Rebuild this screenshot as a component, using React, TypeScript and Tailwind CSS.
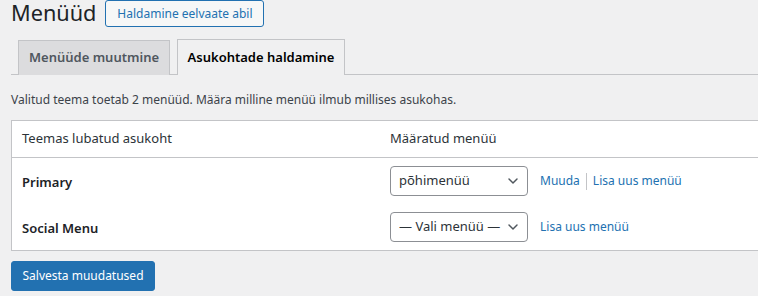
import React from 'react';

const locations = [
  { name: 'Primary', selected: 'põhimenüü', edit: true },
  { name: 'Social Menu', selected: '— Vali menüü —', edit: false },
];

const Chevron = () => (
  <svg width="16" height="16" viewBox="0 0 20 20" className="shrink-0">
    <path d="M5 7.5l5 5 5-5" fill="none" stroke="#50575e" strokeWidth="1.8" strokeLinecap="round" strokeLinejoin="round" />
  </svg>
);

const App = () => {
  return (
    <div className="w-[758px] h-[296px] overflow-hidden bg-[#f0f0f1] text-[#3c434a] font-['Noto_Sans',sans-serif]">
      <div className="pl-[11px]">
        <div className="flex items-start h-[39px]">
          <h1 className="text-[21.7px] leading-[25px] text-[#1d2327]">Menüüd</h1>
          <button className="ml-[9px] h-[27px] w-[159px] text-[12px] leading-none text-[#2271b1] bg-[#f6f7f7] border border-[#2271b1] rounded-[3px] whitespace-nowrap">
            Haldamine eelvaate abil
          </button>
        </div>

        <div className="flex items-end h-[36px] border-b border-[#c3c4c7] pl-[7px] gap-[7px] w-[800px]">
          <div className="h-[35px] w-[152px] flex items-center justify-center bg-[#dcdcde] border border-b-0 border-[#c3c4c7] text-[13px] font-semibold text-[#50575e] -mb-px whitespace-nowrap">
            Menüüde muutmine
          </div>
          <div className="h-[36px] w-[168px] flex items-center justify-center bg-[#f0f0f1] border border-b-0 border-[#c3c4c7] text-[13px] font-semibold text-[#000] -mb-px whitespace-nowrap">
            Asukohtade haldamine
          </div>
        </div>

        <p className="text-[12px] leading-[18px] mt-[16px] mb-[11px]">
          Valitud teema toetab 2 menüüd. Määra milline menüü ilmub millises asukohas.
        </p>

        <div className="w-[800px] bg-white border border-[#c3c4c7]">
          <div className="flex h-[37px] items-center border-b border-[#c3c4c7] text-[13px] text-[#2c3338]">
            <div className="w-[368px] pl-[10px]">Teemas lubatud asukoht</div>
            <div className="pl-[10px]">Määratud menüü</div>
          </div>
          {locations.map((loc, index) => (
            <div key={index} className="flex h-[46px] items-center">
              <div className="w-[368px] pl-[10px] text-[13px] font-semibold text-[#1d2327] mt-[4px]">{loc.name}</div>
              <div className="pl-[10px] flex items-center">
                <div className="w-[138px] h-[30px] pl-[8px] pr-[6px] flex items-center justify-between border border-[#8c8f94] rounded-[4px] text-[13px] text-[#2c3338] bg-white whitespace-nowrap">
                  <span>{loc.selected}</span>
                  <Chevron />
                </div>
                <div className="ml-[12px] flex items-center text-[12px] text-[#2271b1] whitespace-nowrap">
                  {loc.edit && (
                    <>
                      <span>Muuda</span>
                      <span className="mx-[6px] w-px h-[17px] bg-[#c3c4c7]" />
                    </>
                  )}
                  <span>Lisa uus menüü</span>
                </div>
              </div>
            </div>
          ))}
        </div>

        <button className="mt-[10px] h-[30px] w-[144px] text-[12px] text-white bg-[#2271b1] border border-[#2271b1] rounded-[3px] whitespace-nowrap">
          Salvesta muudatused
        </button>
      </div>
    </div>
  );
};

export default App;
